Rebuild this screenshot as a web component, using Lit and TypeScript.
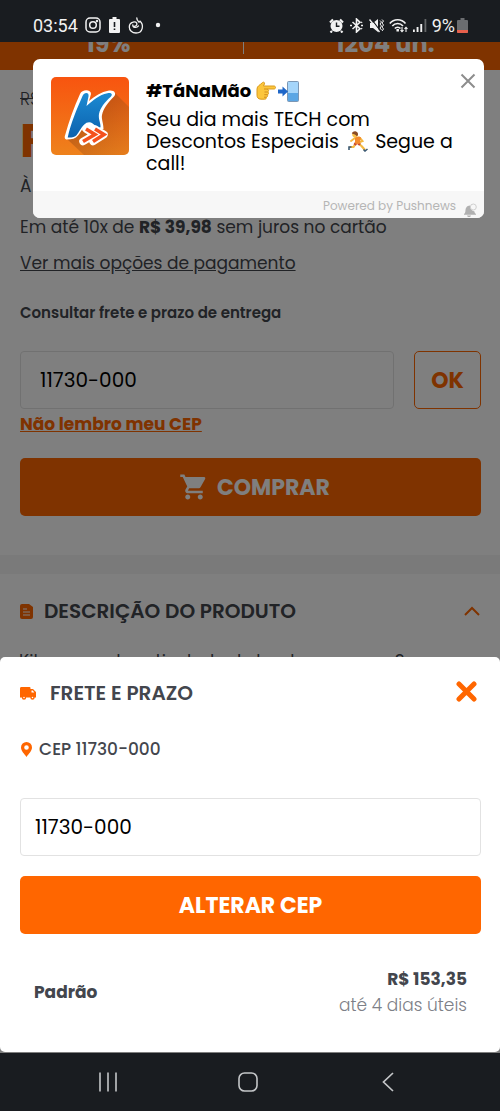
import { LitElement, html, css, svg } from "lit";
import { customElement, property } from "lit/decorators.js";

const base = css`
  :host {
    display: block;
    box-sizing: border-box;
    font-family: Poppins, Inter, sans-serif;
    color: #43464d;
  }
  *, *::before, *::after {
    box-sizing: border-box;
  }
  p, h1, h2, h3 {
    margin: 0;
    font-weight: 400;
  }
  button {
    font: inherit;
    border: 0;
    padding: 0;
    background: none;
    cursor: pointer;
  }
  svg {
    display: block;
    flex: none;
  }
  .field {
    width: 100%;
    min-width: 0;
    height: 58px;
    border: 1px solid #e2e2e2;
    border-radius: 4px;
    background: #fff;
    color: #000;
    font: 400 20px Poppins, Inter, sans-serif;
    outline: 0;
  }
  .primary {
    display: flex;
    align-items: center;
    justify-content: center;
    gap: 8px;
    width: 100%;
    height: 58px;
    border-radius: 5px;
    background: #ff6600;
    color: #fff;
    font-size: 22px;
    font-weight: 700;
  }
`;

@customElement("status-bar")
class StatusBar extends LitElement {
  static styles = [
    base,
    css`
      :host {
        display: flex;
        align-items: center;
        justify-content: space-between;
        height: 42px;
        padding: 8px 32px 0 33px;
        background: #191c20;
        color: #f2f2f2;
        font: 400 18px Roboto, sans-serif;
      }
      .group {
        display: flex;
        align-items: center;
        gap: 7px;
      }
      .right {
        gap: 5px;
      }
      .power {
        display: flex;
        align-items: center;
        gap: 2px;
      }
    `,
  ];

  render() {
    return html`
      <div class="group">
        <span>03:54</span>
        <svg width="16" height="16" viewBox="0 0 16 16" fill="none" stroke="currentColor" stroke-width="1.5">
          <rect x="1" y="1" width="14" height="14" rx="4" />
          <circle cx="8" cy="8" r="3.3" />
          <circle cx="12" cy="4" r=".5" />
        </svg>
        <svg width="13" height="16" viewBox="0 0 13 16">
          <path fill="currentColor" d="M4.500 0h4v2H11a1 1 0 0 1 1 1v12a1 1 0 0 1-1 1H2a1 1 0 0 1-1-1V3a1 1 0 0 1 1-1h2.500z" />
          <path stroke="#191c20" stroke-width="1.600" d="M6.500 5v5M6.500 11.500v1.600" />
        </svg>
        <svg width="16" height="17" viewBox="0 0 16 17" fill="none" stroke="currentColor" stroke-width="1.300" stroke-linecap="round" stroke-linejoin="round">
          <path d="M8.800 1c-.2 1.800.9 3 2.200 4.200.5-.2.800-.6.900-1.100 2.200 2 2.900 4.700 2.300 7.200C13.500 14.200 11 16 8 16c-3.900 0-6.700-2.700-6.700-6 0-2.400 1.500-4.200 3.700-4.900C7.200 4.300 8.900 5.200 8.900 7c0 1.600-1.400 2.500-3 2.300" />
          <path d="M4.800 8c-.2 2.400 3.600 3.600 5.700.9" />
        </svg>
        <svg width="10" height="6" viewBox="0 0 10 6"><circle cx="7" cy="3" r="2.200" fill="currentColor" /></svg>
      </div>
      <div class="group right">
        <svg width="15" height="15" viewBox="0 0 15 15">
          <circle cx="7.500" cy="8" r="6" fill="currentColor" />
          <path d="M1 4.500 4 1.500M14 4.500l-3-3M3 13l-1.500 1.500M12 13l1.500 1.500" stroke="currentColor" stroke-width="2.200" />
          <path d="M7.500 4.500V8.300h3" stroke="#191c20" stroke-width="1.400" fill="none" />
        </svg>
        <svg width="15" height="15" viewBox="0 0 15 15" fill="none" stroke="currentColor" stroke-width="1.600">
          <path d="M3.500 4 11 10.700 7.500 14V1L11 4.300 3.500 11" />
          <path d="M1 7.500h2M12 7.500h2M13 4l-.8.800M13 11l-.8-.8" />
        </svg>
        <svg width="15" height="15" viewBox="0 0 15 15">
          <path d="M1 5h3l5-4v13l-5-4H1z" fill="currentColor" />
          <path d="m2 .5 9 12" stroke="#191c20" stroke-width="1.200" />
          <path d="m.5 1.500 10 12.500" stroke="currentColor" stroke-width="1.400" />
          <path d="M11 2.500 12.500 4 11 6l1.500 2L11 10l1.500 2M13 1.500 14.500 3 13 5l1.500 2L13 9l1.500 2-1.500 2" stroke="currentColor" stroke-width="1" fill="none" />
        </svg>
        <svg width="19" height="15" viewBox="0 0 19 15" fill="none" stroke="currentColor" stroke-width="1.600">
          <path d="M.8 5.500C4.800.4 12.500.4 16.500 5.500M3.300 8c2.800-3.300 8-3.300 10.700 0M5.800 10.500c1.500-1.700 4.200-1.700 5.700 0" />
          <path d="M8.700 11v2.500" stroke-width="2.500" />
          <path d="M13 9v4.500M11.500 12.200l1.500 1.600 1.500-1.600M17 14V9.500M15.500 10.800 17 9.200l1.500 1.600" stroke-width="1.100" />
        </svg>
        <svg width="14" height="15" viewBox="0 0 14 15" fill="currentColor">
          <path d="M0 11.500h1.800V14H0zM3.600 9h1.900v5H3.600zM7.300 6h1.900v8H7.300z" />
          <path d="M11.500 1h1.800v13h-1.800z" opacity=".35" />
        </svg>
        <div class="power">
          <span>9%</span>
          <svg width="11" height="15" viewBox="0 0 11 15">
            <path d="M3.500 0h4v2H10a1 1 0 0 1 1 1v11a1 1 0 0 1-1 1H1a1 1 0 0 1-1-1V3a1 1 0 0 1 1-1h2.500z" fill="#6b6d70" />
            <path d="M0 12h11v2a1 1 0 0 1-1 1H1a1 1 0 0 1-1-1z" fill="#e8604c" />
          </svg>
        </div>
      </div>
    `;
  }
}

@customElement("product-page")
class ProductPage extends LitElement {
  @property() cep = "";

  static styles = [
    base,
    css`
      :host {
        background: #fff;
      }
      .deal {
        display: grid;
        grid-template-columns: 216fr 54fr 230fr;
        justify-items: center;
        height: 60px;
        margin-top: -32px;
        padding-top: 20px;
        background: #ff6600;
        color: #fff;
        font-size: 24px;
        line-height: 28px;
        font-weight: 700;
      }
      .divider {
        width: 1px;
        height: 24px;
        background: #fff;
      }
      .offer {
        display: flex;
        flex-direction: column;
        padding: 19px 19px 39px 20px;
      }
      .old {
        font-size: 17px;
        line-height: 20px;
        font-weight: 300;
      }
      .price {
        margin-top: 8px;
        font-size: 48px;
        line-height: 48px;
        font-weight: 700;
        color: #ff6600;
      }
      .cash {
        margin-top: 10px;
        font-size: 17px;
        line-height: 22px;
      }
      .parcels {
        margin-top: 18px;
        font-size: 17px;
        line-height: 24px;
      }
      .options {
        align-self: flex-start;
        margin-top: 12px;
        font-size: 17px;
        line-height: 24px;
        color: inherit;
      }
      .label {
        margin-top: 28px;
        font-size: 15px;
        line-height: 20px;
        font-weight: 600;
      }
      .row {
        display: flex;
        gap: 20px;
        margin-top: 28px;
      }
      .row .field {
        flex: 1;
        padding: 0 19px;
      }
      .ok {
        width: 67px;
        border: 1px solid #ff6600;
        border-radius: 5px;
        color: #ff6600;
        font-size: 22px;
        font-weight: 700;
      }
      .forgot {
        align-self: flex-start;
        margin: 4px 0 23px;
        font-size: 17px;
        line-height: 22px;
        font-weight: 700;
        color: #ff6600;
      }
      .buy {
        padding-left: 8px;
      }
      .description {
        padding: 22px 19px;
        border-top: 19px solid #f4f4f4;
      }
      .heading {
        display: flex;
        align-items: center;
        gap: 10px;
      }
      .heading h2 {
        flex: 1;
        font-size: 20px;
        line-height: 30px;
        font-weight: 600;
      }
      .copy {
        margin-top: 23px;
        font-size: 17px;
        line-height: 24px;
        white-space: nowrap;
      }
    `,
  ];

  render() {
    return html`
      <div class="deal"><span>19%</span><span class="divider"></span><span>1204 un.</span></div>
      <section class="offer">
        <s class="old">R$</s>
        <p class="price">R$</p>
        <p class="cash">À</p>
        <p class="parcels">Em até 10x de <b>R$ 39,98</b> sem juros no cartão</p>
        <a class="options" href="#pagamento">Ver mais opções de pagamento</a>
        <label class="label" for="cep">Consultar frete e prazo de entrega</label>
        <div class="row">
          <input class="field" id="cep" .value=${this.cep} />
          <button class="ok">OK</button>
        </div>
        <a class="forgot" href="#cep">Não lembro meu CEP</a>
        <button class="primary buy">
          <svg width="30" height="30" viewBox="0 0 24 24" fill="currentColor">
            <path d="M7 18c-1.100 0-2 .9-2 2s.9 2 2 2 2-.9 2-2-.9-2-2-2zM1 2v2h2l3.600 7.600-1.400 2.400c-.7 1.300.3 3 1.800 3h12v-2H7.400c-.1 0-.2-.1-.2-.2l.9-1.800h7.500c.7 0 1.400-.4 1.700-1l3.600-6.500c.4-.7-.1-1.500-.8-1.500H5.200l-.9-2H1zm16 16c-1.100 0-2 .9-2 2s.9 2 2 2 2-.9 2-2-.9-2-2-2z" />
          </svg>
          COMPRAR
        </button>
      </section>
      <section class="description">
        <div class="heading">
          <svg width="15" height="15" viewBox="0 0 15 15">
            <path d="M3 0h7l4 3v10a2 2 0 0 1-2 2H3a2 2 0 0 1-2-2V2a2 2 0 0 1 2-2z" fill="#ff6600" />
            <path d="M4 5h4M4 8h7M4 11h7" stroke="#fff" stroke-width="1.200" />
          </svg>
          <h2>DESCRIÇÃO DO PRODUTO</h2>
          <svg width="18" height="12" viewBox="0 0 18 12" fill="none" stroke="#ff6600" stroke-width="2">
            <path d="m2 10 7-7 7 7" />
          </svg>
        </div>
        <p class="copy">Kit compacto articulado de banho com uso 2</p>
      </section>
    `;
  }
}

const pointing = svg`
  <path d="M2 9c0-3 3-4 5-6 1.200-1.600 3.200-.6 2.400 1L8.500 6H19c2 0 2 3 0 3h-7c2 .3 2 2.500.8 2.900 1.200.7.900 2.600-.5 2.800.8.900.2 2.400-1 2.500.3 1.400-.6 2-1.800 2H6c-3 0-4-2-4-4z"
    fill="#fcc63c" stroke="#d99a1e" stroke-width="1" />
  <path d="M12 9H9M12.800 12H9.500M12.300 14.700h-3M11 17.200H9" stroke="#d08d1c" stroke-width="1" />
`;
const phoneArrow = svg`
  <rect x="9.500" y="0.500" width="11" height="20" rx="1" fill="#8fc9f5" stroke="#7c97b4" />
  <path d="M10 1h10v11H10z" fill="#a5d5fa" /><path d="M10 12h10v8H10z" fill="#5ba6e4" />
  <path d="M0 8.500h4.500V5.500L10 10.500 4.500 15.500v-3H0z" fill="#1e66c8" />
`;
const runner = svg`
  <path d="m8 12-2.500 4H1.500M10 12l3.500 3 3.500 4" stroke="#f5b942" stroke-width="2.200" fill="none" stroke-linejoin="round" />
  <path d="M3.500 16H1v3M15.500 18.500l1.500 1.500 2.500-2" stroke="#3d5a73" stroke-width="1.600" fill="none" />
  <path d="m8 12-1.300 2M10 12l2 1.700" stroke="#c9482f" stroke-width="2.800" fill="none" />
  <path d="M7 7 3 10M12 7l2.500 3L12 11" stroke="#f5b942" stroke-width="2" fill="none" stroke-linecap="round" />
  <path d="M7 6.500c2-1.500 5-1.500 6 0L11.500 13 7 12.500z" fill="#f58a2c" />
  <circle cx="7" cy="3.600" r="2.800" fill="#f8c04a" />
  <path d="M3.800 2.500C5-.5 9.500-.5 10 3c0 1.500-.5 2-1.300 2.300C8 3.500 6 3 3.800 2.500z" fill="#8a4b24" />
`;

@customElement("push-card")
class PushCard extends LitElement {
  static styles = [
    base,
    css`
      :host {
        border-radius: 7px;
        background: #fff;
        color: #000;
        overflow: hidden;
      }
      .main {
        display: flex;
        gap: 17px;
        min-height: 132px;
        padding: 18px 8px 0 18px;
      }
      .text {
        flex: 1;
        min-width: 0;
      }
      .title {
        display: flex;
        align-items: center;
        gap: 2px;
        font-size: 18px;
        line-height: 28px;
        font-weight: 700;
      }
      .title span {
        margin-right: 2px;
      }
      .body {
        margin-top: 4px;
        font-size: 19px;
        line-height: 22px;
      }
      .body svg {
        display: inline-block;
        margin: 0 2px 0 4px;
        vertical-align: -4px;
      }
      .close {
        align-self: flex-start;
        margin: -5px -1px 0 -32px;
        padding: 1px;
        color: #8d8d8d;
      }
      .foot {
        display: flex;
        align-items: center;
        justify-content: flex-end;
        gap: 7px;
        height: 27px;
        padding: 3px 7px 0;
        background: #f7f7f7;
        color: #b5b5b5;
        font-size: 12px;
      }
      .bell {
        margin-top: 8px;
      }
    `,
  ];

  render() {
    return html`
      <div class="main">
        <svg width="78" height="78" viewBox="0 0 78 78">
          <defs>
            <linearGradient id="bg" x1="0" y1="0" x2="0" y2="1">
              <stop offset="0" stop-color="#f8540f" />
              <stop offset="1" stop-color="#ee821c" />
            </linearGradient>
            <linearGradient id="k" x1="0" y1="0" x2="0" y2="1">
              <stop offset="0" stop-color="#1c8ad2" />
              <stop offset="1" stop-color="#0c62ae" />
            </linearGradient>
            <linearGradient id="shade" x1="0" y1="0" x2="1" y2="1">
              <stop offset="0" stop-color="#8a3f10" stop-opacity=".75" />
              <stop offset="1" stop-color="#b5601c" stop-opacity=".15" />
            </linearGradient>
          </defs>
          <rect width="78" height="78" rx="5" fill="url(#bg)" />
          <path d="M63 15 78 30v43a5 5 0 0 1-5 5H33L16 62z" fill="url(#shade)" />
          <path d="M29 17c2-5 11-5 11 0l-2 7c6-5 12-9 20-10.500 5-.8 8 2.500 5 6-6 6-10.500 11.500-12 18.500-.8 4 1.500 8 1.500 14H38l-4-3c-3 3-4.500 6.500-7 9.500-2.500 3-6 4-11 4-2.500 0-2.500-2.500-2-4C18 44 23 30 29 17z" fill="#fff" />
          <path d="M31.500 19c1.500-4 7-4 6 .5L35.500 29c7-6 12.500-11 21-12.700 4-.8 5.500 1.200 3.300 3.500C53.500 25.500 49.500 30.500 48 37c-.9 5 2 9.500 1.500 13-1 2-4 1-5-.8-2.600-4-7.500-6-11.500-1.400-4 4.400-5 7.600-7.500 10.400-1.500 1.500-4.500 2.500-8.800 2.300C20 45.500 25.500 33 31.500 19z" fill="url(#k)" />
          <path d="m35 52 9 5.500-12 7M44 52l9 5.500-11 7" fill="none" stroke="#fff" stroke-width="7.500" stroke-linejoin="round" stroke-linecap="round" />
          <path d="m35 52 9 5.500-12 7M44 52l9 5.500-11 7" fill="none" stroke="#f4511e" stroke-width="3.600" />
        </svg>
        <div class="text">
          <h3 class="title">
            <span>#TáNaMão</span>
            <svg width="21" height="22" viewBox="0 0 21 22">${pointing}</svg>
            <svg width="21" height="21" viewBox="0 0 21 21">${phoneArrow}</svg>
          </h3>
          <p class="body">
            Seu dia mais TECH com<br />Descontos Especiais
            <svg width="20" height="21" viewBox="0 0 20 21">${runner}</svg>
            Segue a<br />call!
          </p>
        </div>
        <button class="close" aria-label="Fechar">
          <svg width="16" height="16" viewBox="0 0 16 16" stroke="currentColor" stroke-width="2"><path d="m1.500 1.500 13 13M14.500 1.500l-13 13" /></svg>
        </button>
      </div>
      <div class="foot">
        <span>Powered by Pushnews</span>
        <svg class="bell" width="14" height="14" viewBox="0 0 14 14">
          <path d="M1 11c2-1 1-4 2-6 1-1.800 2.500-2.500 4-2.500C7 6 9 8 11.500 8.500c0 1 .5 2 1.500 2.500v.8H1zM4 12.500h4c-.5 2-3.500 2-4 0z" fill="#b0b0b0" />
          <circle cx="10.300" cy="4" r="3" fill="none" stroke="#cfcfcf" />
        </svg>
      </div>
    `;
  }
}

@customElement("shipping-sheet")
class ShippingSheet extends LitElement {
  @property() cep = "";

  static styles = [
    base,
    css`
      :host {
        padding: 20px 19px 34px 20px;
        border-radius: 5px;
        background: #fff;
      }
      .head {
        display: flex;
        align-items: center;
        gap: 13px;
        height: 32px;
      }
      .head h2 {
        flex: 1;
        font-size: 20px;
        font-weight: 600;
      }
      .close {
        padding: 0 4px 4px;
        color: #ff6600;
      }
      .place {
        display: flex;
        align-items: center;
        gap: 4px;
        margin: 28px 0 37px;
        font-size: 17px;
        line-height: 24px;
        font-weight: 500;
      }
      .form {
        display: grid;
        gap: 20px;
      }
      .form .field {
        padding: 0 14px;
      }
      .result {
        display: flex;
        align-items: center;
        justify-content: space-between;
        margin-top: 32px;
        padding: 0 14px;
        font-size: 17px;
        line-height: 26px;
      }
      .result b {
        font-weight: 700;
      }
      .cost {
        text-align: right;
      }
      .days {
        color: #7d8087;
        font-weight: 300;
      }
    `,
  ];

  render() {
    return html`
      <div class="head">
        <svg width="17" height="14" viewBox="0 0 17 14">
          <path d="M1.500 1H9.500a1 1 0 0 1 1 1v1h2.500L16 6v5.500H0V2.500C0 1.500.6 1 1.500 1z" fill="#ff6600" />
          <path d="M11.500 4.500h1.300l1.500 2h-2.800z" fill="#fff" />
          <circle cx="4" cy="11.500" r="1.500" fill="#fff" stroke="#ff6600" stroke-width="1.400" />
          <circle cx="12.500" cy="11.500" r="1.500" fill="#fff" stroke="#ff6600" stroke-width="1.400" />
        </svg>
        <h2>FRETE E PRAZO</h2>
        <button class="close" aria-label="Fechar">
          <svg width="21" height="21" viewBox="0 0 21 21" stroke="currentColor" stroke-width="5" stroke-linecap="round"><path d="m3 3 15 15M18 3 3 18" /></svg>
        </button>
      </div>
      <p class="place">
        <svg width="15" height="15" viewBox="0 0 15 15">
          <path fill-rule="evenodd" d="M6.500 0a5.500 5.500 0 0 1 5.500 5.500C12 9 8.500 12 6.500 15 4.500 12 1 9 1 5.500A5.500 5.500 0 0 1 6.500 0zm0 3.200a2.300 2.300 0 1 0 0 4.600 2.300 2.300 0 0 0 0-4.600z" fill="#ff6600" />
        </svg>
        CEP ${this.cep}
      </p>
      <div class="form">
        <input class="field" aria-label="CEP" .value=${this.cep} />
        <button class="primary">ALTERAR CEP</button>
      </div>
      <div class="result">
        <b>Padrão</b>
        <div class="cost">
          <p><b>R$ 153,35</b></p>
          <p class="days">até 4 dias úteis</p>
        </div>
      </div>
    `;
  }
}

@customElement("nav-bar")
class NavBar extends LitElement {
  static styles = [
    base,
    css`
      :host {
        display: grid;
        grid-template-columns: repeat(3, 140px);
        justify-content: center;
        justify-items: center;
        align-items: center;
        height: 58px;
        padding-right: 4px;
        background: #191c20;
        color: #c4c6c8;
      }
      button {
        color: inherit;
      }
    `,
  ];

  render() {
    return html`
      <button aria-label="Recentes">
        <svg width="20" height="20" viewBox="0 0 20 20" stroke="currentColor" stroke-width="1.600"><path d="M2 .5v19M10 .5v19M18 .5v19" /></svg>
      </button>
      <button aria-label="Início">
        <svg width="20" height="20" viewBox="0 0 20 20" fill="none" stroke="currentColor" stroke-width="1.600"><rect x="1" y="1" width="18" height="18" rx="5.500" /></svg>
      </button>
      <button aria-label="Voltar">
        <svg width="20" height="20" viewBox="0 0 20 20" fill="none" stroke="currentColor" stroke-width="1.700"><path d="M15 1 5.500 10l9.500 9" /></svg>
      </button>
    `;
  }
}

@customElement("app-root")
class AppRoot extends LitElement {
  static styles = [
    base,
    css`
      :host {
        display: flex;
        flex-direction: column;
        height: 100vh;
      }
      .screen {
        position: relative;
        flex: 1;
        min-height: 0;
        overflow: hidden;
        background: #fff;
      }
      .scrim {
        position: absolute;
        inset: 0;
        background: rgba(0, 0, 0, 0.5);
      }
      .push {
        position: absolute;
        top: 17px;
        left: 33px;
        right: 16px;
      }
      .sheet {
        position: absolute;
        left: 0;
        right: 0;
        bottom: 1px;
      }
    `,
  ];

  private cep = "11730-000";

  render() {
    return html`
      <status-bar></status-bar>
      <main class="screen">
        <product-page cep=${this.cep}></product-page>
        <div class="scrim"></div>
        <push-card class="push"></push-card>
        <shipping-sheet class="sheet" cep=${this.cep}></shipping-sheet>
      </main>
      <nav-bar></nav-bar>
    `;
  }
}
